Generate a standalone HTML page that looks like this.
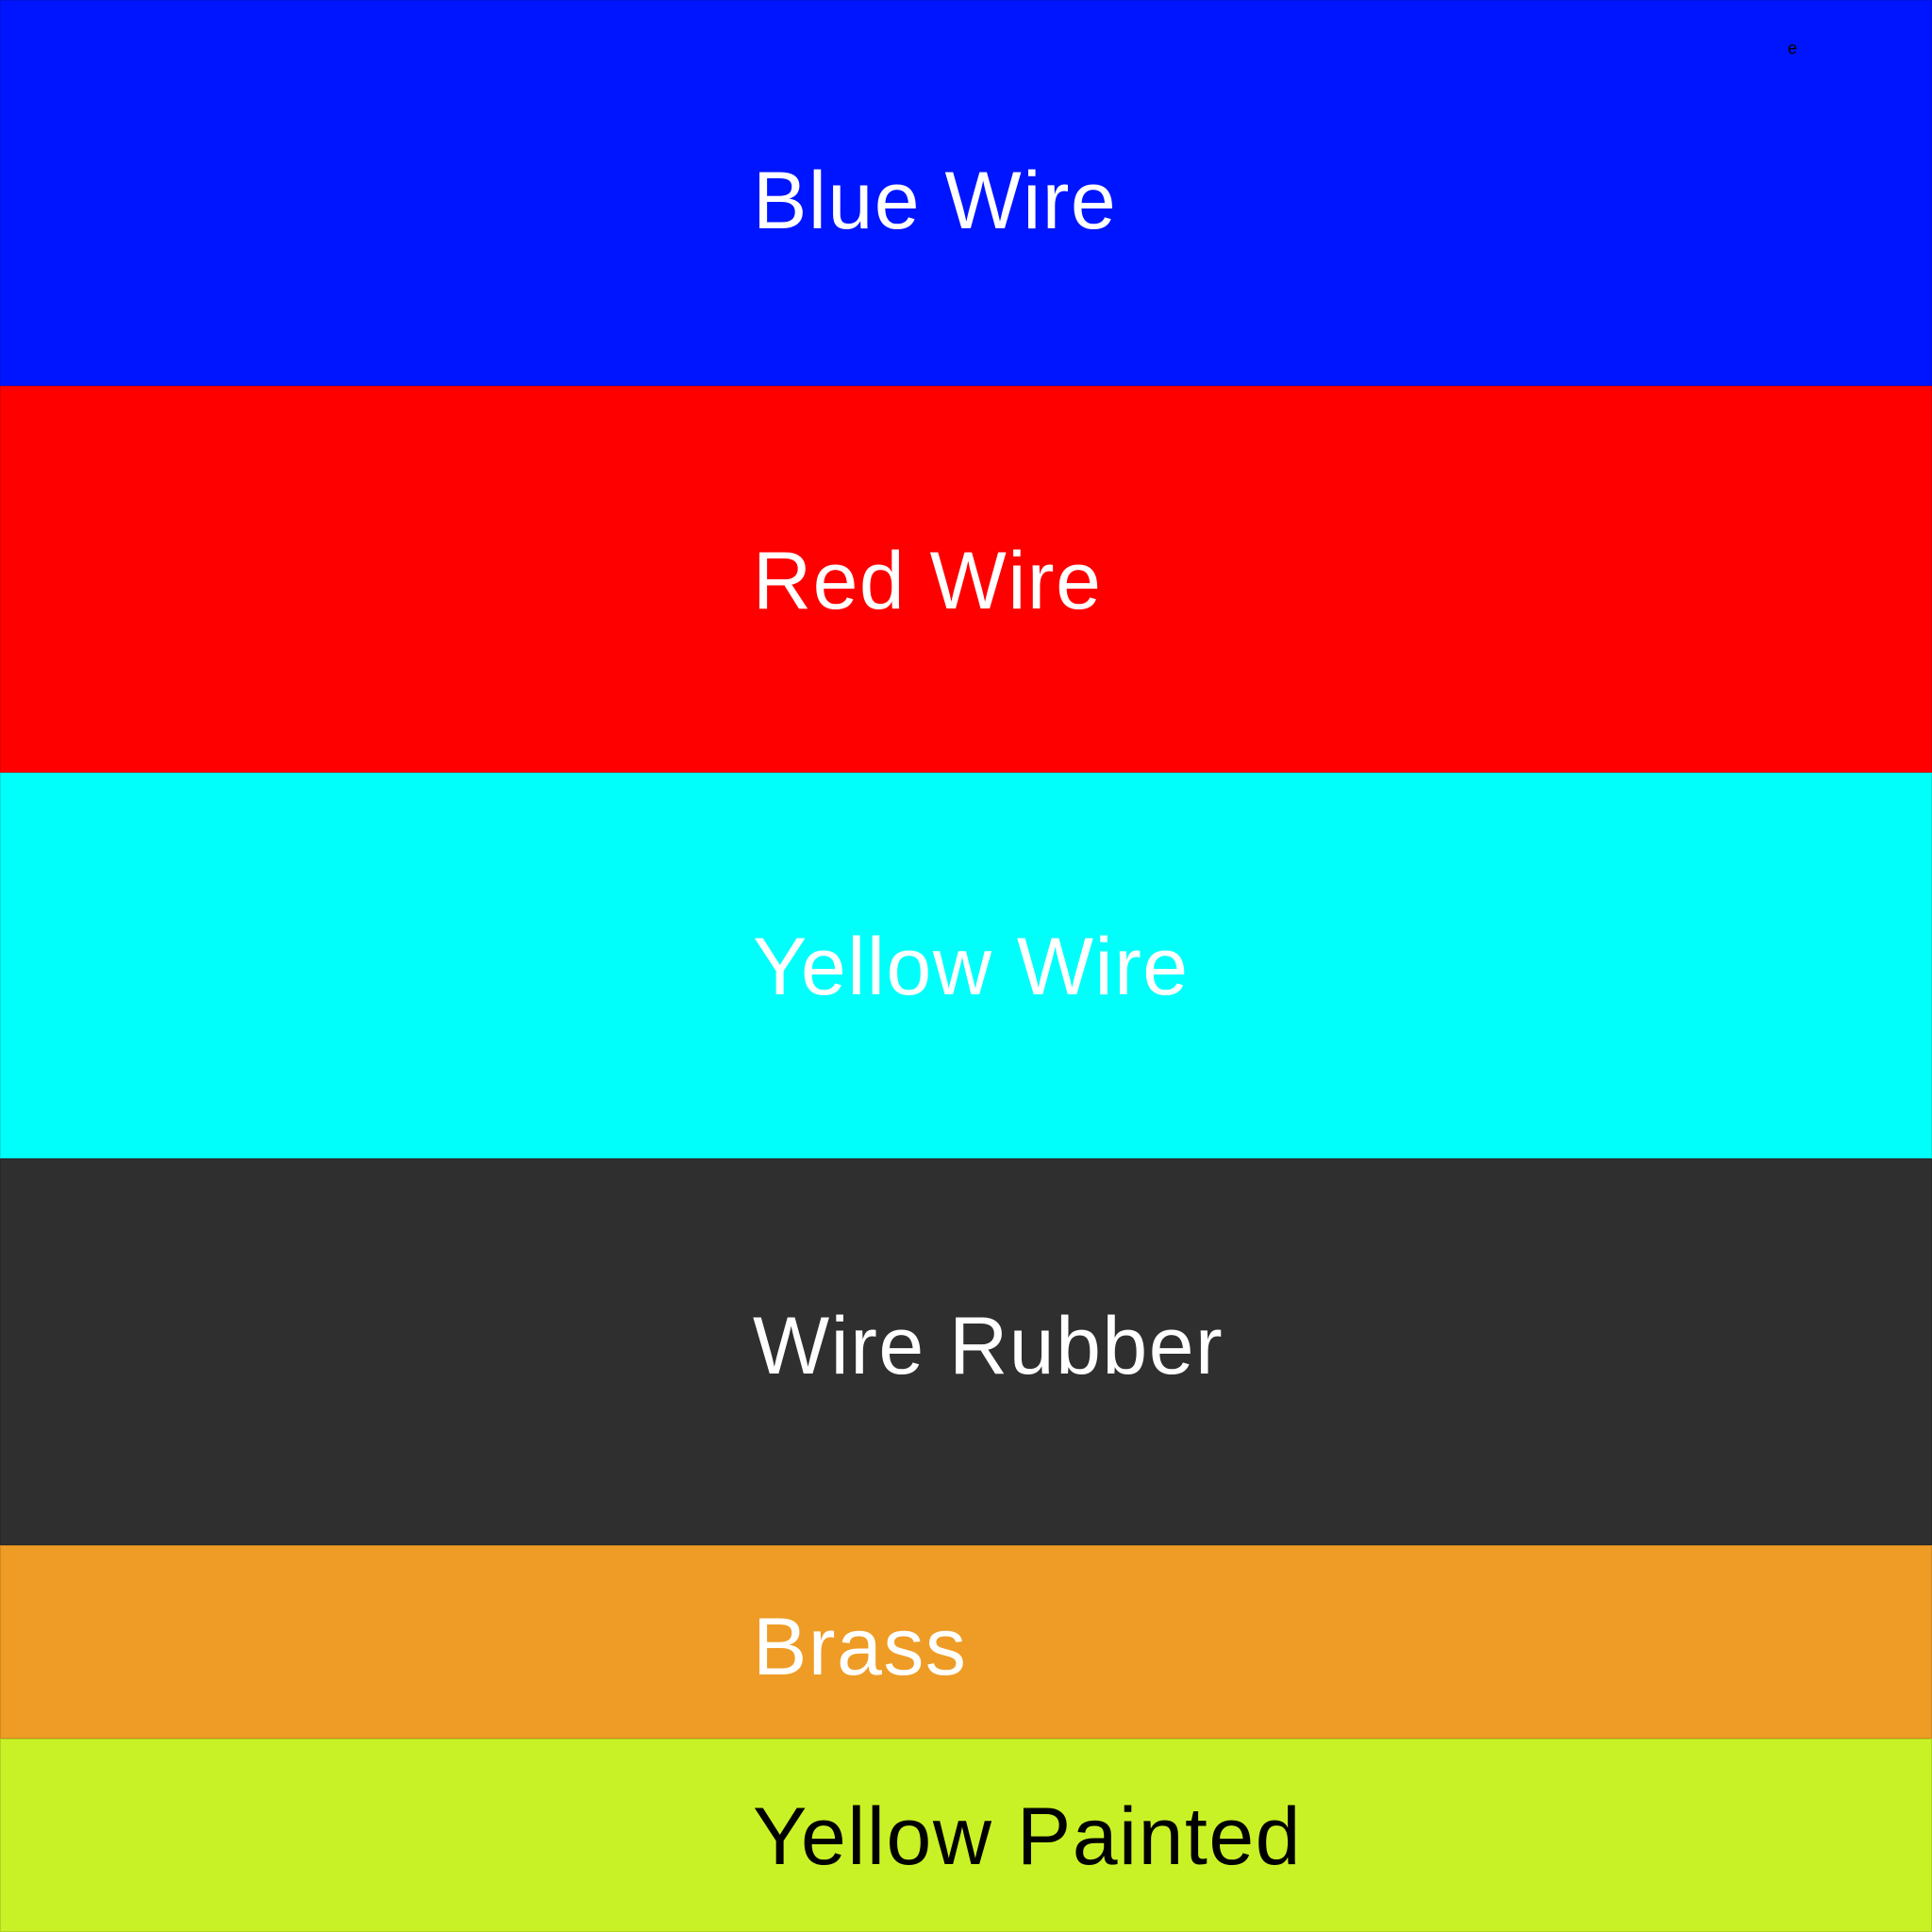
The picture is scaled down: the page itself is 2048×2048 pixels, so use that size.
<!DOCTYPE html>
<html><head><meta charset="utf-8"><style>
html,body{margin:0;padding:0;}
body{width:2048px;height:2048px;position:relative;overflow:hidden;font-family:"Liberation Sans",sans-serif;}
.b{position:absolute;left:0;width:2048px;box-shadow:inset 0 0 0 1px rgba(0,0,0,0.12);}
.t{position:absolute;left:798px;font-size:86px;line-height:1;white-space:nowrap;color:#fff;letter-spacing:1.5px;}
</style></head><body>
<div class="b" style="top:0;height:409px;background:#0015ff"></div>
<div class="b" style="top:409px;height:410px;background:#ff0000"></div>
<div class="b" style="top:819px;height:409px;background:#00fffa"></div>
<div class="b" style="top:1228px;height:410px;background:#2f2f2f"></div>
<div class="b" style="top:1638px;height:205px;background:#ee9c25"></div>
<div class="b" style="top:1843px;height:205px;background:#c9f226"></div>
<div style="position:absolute;left:1895px;top:41px;font-size:18px;color:#000">e</div>
<div class="t" style="top:170px">Blue Wire</div>
<div class="t" style="top:573px">Red Wire</div>
<div class="t" style="top:982px">Yellow Wire</div>
<div class="t" style="top:1384px">Wire Rubber</div>
<div class="t" style="top:1703px">Brass</div>
<div class="t" style="top:1904px;color:#000">Yellow Painted</div>
</body></html>
